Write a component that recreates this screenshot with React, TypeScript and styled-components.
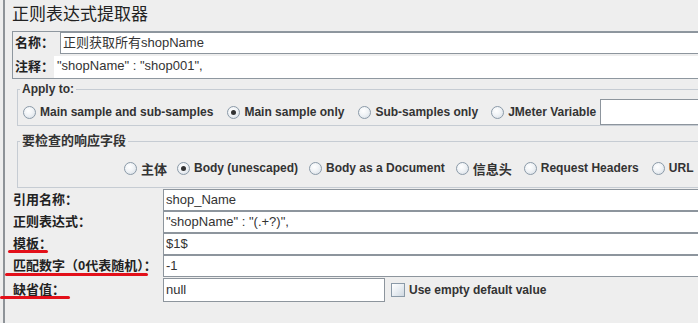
import React from 'react';
import styled, { createGlobalStyle } from 'styled-components';

const GlobalStyle = createGlobalStyle`
  html, body {
    margin: 0;
    padding: 0;
    background: #eeeeee;
    overflow: hidden;
  }
  body {
    font-family: "Liberation Sans", "Noto Sans CJK SC", sans-serif;
    color: #333333;
  }
`;

const FONT = `"Liberation Sans", "Noto Sans CJK SC", sans-serif`;

const Frame = styled.div`
  height: 323px;
  padding-left: 3px;
  background: #eeeeee;
`;

const Body = styled.div`
  height: 100%;
  border-left: 2px solid #8e9398;
  padding-left: 7px;
  margin-right: -6px;
`;

const Title = styled.div`
  font-family: ${FONT};
  font-size: 17px;
  line-height: 20px;
  padding-top: 5px;
  height: 26px;
  color: #222;
`;

const NamePanel = styled.div`
  border: 1px solid #8e979f;
  border-right: none;
  display: flex;
  flex-direction: column;
  height: 46px;
`;

const NameRow = styled.div<{ $gapTop?: number }>`
  display: flex;
  align-items: stretch;
  height: 22px;
  margin-top: ${p => p.$gapTop ?? 0}px;
`;

const NameLabel = styled.div<{ $w: number }>`
  width: ${p => p.$w}px;
  flex: none;
  padding-left: 2px;
  font-family: ${FONT};
  font-weight: bold;
  font-size: 13px;
  line-height: 22px;
  color: #222;
  white-space: nowrap;
  overflow: hidden;
`;

const Field = styled.div<{ $flat?: boolean }>`
  flex: 1;
  background: #ffffff;
  border-right: none;
  border-left: ${p => (p.$flat ? 'none' : '1px solid #8d959d')};
  border-top: ${p => (p.$flat ? 'none' : '1px solid #8d959d')};
  border-bottom: ${p => (p.$flat ? 'none' : '1px solid #8d959d')};
  padding-left: ${p => (p.$flat ? 3 : 2)}px;
  font-family: ${FONT};
  font-size: 13px;
  line-height: 20px;
  color: #333;
  white-space: nowrap;
  overflow: hidden;
`;

const Group = styled.fieldset<{ $top: number; $pt: number; $pb: number }>`
  margin: ${p => p.$top}px 0 0 5px;
  padding: ${p => p.$pt}px 0 ${p => p.$pb}px 0;
  border: 1px solid #c6ccd3;
  border-right: none;
  min-width: 0;
`;

const Legend = styled.legend<{ $size: number }>`
  margin-left: 2px;
  padding: 0 2px;
  font-family: ${FONT};
  font-weight: bold;
  font-size: ${p => p.$size}px;
  line-height: 14px;
  color: #333;
`;

const RadioRow = styled.div<{ $indent: number; $h: number }>`
  display: flex;
  align-items: center;
  height: ${p => p.$h}px;
  padding-left: ${p => p.$indent}px;
  white-space: nowrap;
`;

const Option = styled.label<{ $gap: number; $cjk?: boolean }>`
  display: flex;
  align-items: center;
  gap: 4px;
  margin-right: ${p => p.$gap}px;
  font-family: ${FONT};
  font-weight: bold;
  font-size: ${p => (p.$cjk ? 13 : 12)}px;
  color: #333;
`;

const Dot = styled.span<{ $on?: boolean }>`
  width: 11px;
  height: 11px;
  border-radius: 50%;
  border: 1px solid #8b9aa8;
  background: radial-gradient(circle at 40% 35%, #ffffff 0%, #f0f3f6 45%, #d3dbe3 100%);
  display: flex;
  align-items: center;
  justify-content: center;
  flex: none;

  &::after {
    content: '';
    display: ${p => (p.$on ? 'block' : 'none')};
    width: 5px;
    height: 5px;
    border-radius: 50%;
    background: #333;
  }
`;

const VarInput = styled.div`
  flex: 1;
  height: 24px;
  background: #ffffff;
  border: 1px solid #8d959d;
  border-right: none;
`;

const Grid = styled.div`
  display: grid;
  grid-template-columns: 151px 1fr;
  margin-top: 1px;
`;

type Mark = { left: number; width: number; top: number };

const RowLabel = styled.div<{ $mark?: Mark; $h?: number }>`
  position: relative;
  height: ${p => p.$h ?? 22}px;
  margin-top: ${p => (p.$h ? 1 : 0)}px;
  padding-left: 1px;
  font-family: ${FONT};
  font-weight: bold;
  font-size: 13px;
  line-height: ${p => p.$h ?? 22}px;
  color: #222;
  white-space: nowrap;

  &::after {
    content: '';
    display: ${p => (p.$mark ? 'block' : 'none')};
    position: absolute;
    left: ${p => p.$mark?.left ?? 0}px;
    top: ${p => p.$mark?.top ?? 0}px;
    width: ${p => p.$mark?.width ?? 0}px;
    height: 3px;
    border-radius: 2px;
    background: #e3101a;
  }
`;

const RowField = styled.div`
  height: 22px;
  box-sizing: border-box;
  background: #ffffff;
  border: 1px solid #8d959d;
  border-right: none;
  padding-left: 2px;
  font-family: ${FONT};
  font-size: 13px;
  line-height: 20px;
  color: #333;
  white-space: nowrap;
`;

const LastRow = styled.div`
  display: flex;
  align-items: center;
  gap: 6px;
  height: 24px;
  margin-top: 1px;
`;

const ShortField = styled(RowField)`
  width: 222px;
  height: 24px;
  line-height: 22px;
  border-right: 1px solid #8d959d;
`;

const Check = styled.span`
  width: 12px;
  height: 12px;
  border: 1px solid #8b9aa8;
  background: linear-gradient(135deg, #ffffff 0%, #e9eef3 50%, #cfd8e1 100%);
  flex: none;
`;

const CheckText = styled.span`
  font-family: ${FONT};
  font-weight: bold;
  font-size: 12px;
  color: #333;
  margin-left: -2px;
`;

export default function App() {
  return (
    <Frame>
      <GlobalStyle />
      <Body>
        <Title>正则表达式提取器</Title>
        <NamePanel>
          <NameRow>
            <NameLabel $w={45}>名称：</NameLabel>
            <Field>正则获取所有shopName</Field>
          </NameRow>
          <NameRow $gapTop={2}>
            <NameLabel $w={39}>注释：</NameLabel>
            <Field $flat>"shopName" : "shop001",</Field>
          </NameRow>
        </NamePanel>

        <Group $top={3} $pt={3} $pb={0}>
          <Legend $size={12}>Apply to:</Legend>
          <RadioRow $indent={5} $h={26}>
            <Option $gap={14}><Dot />Main sample and sub-samples</Option>
            <Option $gap={14}><Dot $on />Main sample only</Option>
            <Option $gap={13}><Dot />Sub-samples only</Option>
            <Option $gap={4}><Dot />JMeter Variable</Option>
            <VarInput />
          </RadioRow>
        </Group>

        <Group $top={8} $pt={10} $pb={9}>
          <Legend $size={13}>要检查的响应字段</Legend>
          <RadioRow $indent={106} $h={20}>
            <Option $gap={10} $cjk><Dot />主体</Option>
            <Option $gap={11}><Dot $on />Body (unescaped)</Option>
            <Option $gap={11}><Dot />Body as a Document</Option>
            <Option $gap={12} $cjk><Dot />信息头</Option>
            <Option $gap={13}><Dot />Request Headers</Option>
            <Option $gap={0}><Dot />URL</Option>
          </RadioRow>
        </Group>

        <Grid>
          <RowLabel>引用名称：</RowLabel>
          <RowField>shop_Name</RowField>
          <RowLabel>正则表达式：</RowLabel>
          <RowField>"shopName" : "(.+?)",</RowField>
          <RowLabel $mark={{ left: -4, width: 40, top: 17 }}>模板：</RowLabel>
          <RowField>$1$</RowField>
          <RowLabel $mark={{ left: -7, width: 143, top: 18 }}>匹配数字（0代表随机）：</RowLabel>
          <RowField>-1</RowField>
          <RowLabel $mark={{ left: -12, width: 70, top: 18 }} $h={24}>
            缺省值：
          </RowLabel>
          <LastRow>
            <ShortField>null</ShortField>
            <Check />
            <CheckText>Use empty default value</CheckText>
          </LastRow>
        </Grid>
      </Body>
    </Frame>
  );
}
